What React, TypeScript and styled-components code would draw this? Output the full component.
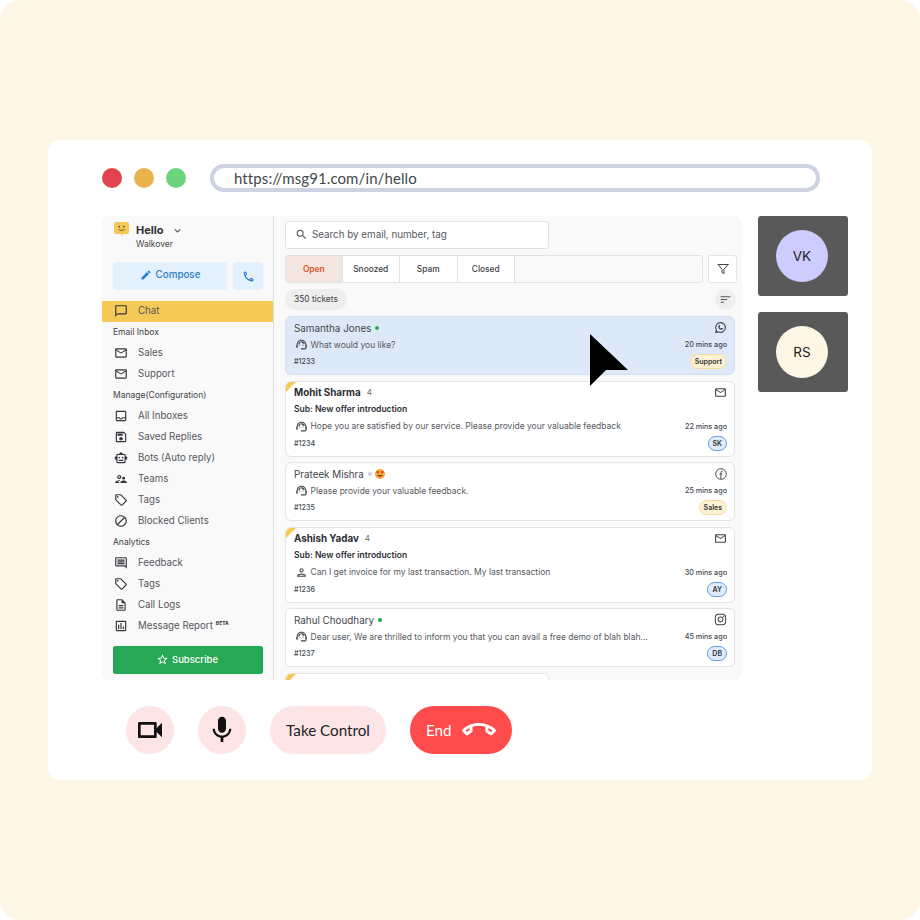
import React from 'react';
import styled, { createGlobalStyle } from 'styled-components';
import {
  MdEdit,
  MdExpandMore,
  MdMic,
  MdOutlineAssessment,
  MdOutlineBlock,
  MdOutlineCall,
  MdOutlineCallEnd,
  MdOutlineChatBubbleOutline,
  MdOutlineDescription,
  MdOutlineEmail,
  MdOutlineInbox,
  MdOutlineInsertComment,
  MdOutlineLocalOffer,
  MdOutlinePerson,
  MdOutlineSave,
  MdOutlineSmartToy,
  MdOutlineStarBorder,
  MdOutlineSupervisorAccount,
  MdOutlineSupportAgent,
  MdOutlineVideocam,
  MdSearch,
  MdSort,
} from 'react-icons/md';
import { FaInstagram } from 'react-icons/fa';
import { TbBrandWhatsapp } from 'react-icons/tb';
import { LuFilter } from 'react-icons/lu';

const GlobalStyle = createGlobalStyle`
  html, body {
    margin: 0;
    background: #fff;
    font-family: Inter, "Liberation Sans", sans-serif;
  }
  * {
    box-sizing: border-box;
  }
`;

const Page = styled.div`
  width: 920px;
  height: 920px;
  padding: 140px 48px;
  background: #fef6e5;
  border-radius: 20px;
`;

const Frame = styled.div`
  height: 640px;
  padding: 24px 24px 26px 54px;
  background: #fff;
  border-radius: 12px;
`;

const TopBar = styled.div`
  display: flex;
  align-items: center;
  height: 28px;
  margin-bottom: 24px;
`;

const Dot = styled.span<{ $color: string }>`
  width: 20px;
  height: 20px;
  margin-right: 12px;
  border-radius: 50%;
  background: ${({ $color }) => $color};
`;

const UrlBar = styled.div`
  display: flex;
  align-items: center;
  width: 610px;
  height: 28px;
  margin-left: 12px;
  padding-left: 20px;
  border: 4px solid #cdd3e2;
  border-radius: 14px;
  color: #44474c;
  font-family: Lato, sans-serif;
  font-size: 15px;
  letter-spacing: 0.1px;
`;

const Workspace = styled.div`
  position: relative;
  display: flex;
  gap: 16px;
  height: 464px;
  margin-bottom: 26px;
`;

const Panel = styled.div`
  display: flex;
  width: 640px;
  height: 464px;
  overflow: hidden;
  background: #f9f9f9;
  border-radius: 8px;
`;

const Sidebar = styled.aside`
  flex: none;
  width: 172px;
  border-right: 1px solid #e0e0e0;
`;

const Brand = styled.div`
  display: grid;
  grid-template-columns: 22px auto 1fr;
  grid-template-rows: 14px 12px;
  row-gap: 1px;
  align-items: center;
  height: 46px;
  padding: 7px 0 0 12px;
  color: #2e3136;
`;

const BrandName = styled.span`
  font-size: 11px;
  font-weight: 700;
`;

const BrandChevron = styled.span`
  display: flex;
  margin-left: 8px;
  color: #555;
`;

const BrandOrg = styled.span`
  grid-column: 2 / 4;
  font-size: 8.5px;
  color: #444;
`;

const Actions = styled.div`
  display: flex;
  gap: 6px;
  height: 28px;
  margin: 0 10px 11px 11px;
`;

const ActionButton = styled.div<{ $wide?: boolean }>`
  display: flex;
  flex: ${({ $wide }) => ($wide ? '1' : 'none')};
  align-items: center;
  justify-content: center;
  gap: 4px;
  width: 30px;
  padding-bottom: ${({ $wide }) => ($wide ? '3px' : '0')};
  background: #e3f0fe;
  border-radius: 3px;
  color: #2b7cc4;
  font-size: 9.8px;
  font-weight: 500;
`;

const NavItem = styled.div<{ $active?: boolean }>`
  display: flex;
  align-items: center;
  height: 21px;
  padding: 0 0 2px 12px;
  background: ${({ $active }) => ($active ? '#f4c955' : 'transparent')};
  color: #55585d;
  font-size: 9.7px;
  svg {
    flex: none;
    width: 14px;
    height: 14px;
    margin-right: 10px;
    color: #34373c;
  }
`;

const NavLabel = styled.div`
  display: flex;
  align-items: center;
  height: 21px;
  padding: 0 0 2px 11px;
  color: #3d4045;
  font-size: 8.5px;
`;

const Beta = styled.span`
  margin: 0 0 6px 3px;
  font-size: 5px;
  font-weight: 700;
  color: #333;
`;

const Subscribe = styled.div`
  display: flex;
  align-items: center;
  justify-content: center;
  gap: 3px;
  height: 28px;
  margin: 9px 10px 0 11px;
  padding: 0 2px 2px 0;
  background: #27a855;
  border-radius: 2px;
  color: #fff;
  font-size: 9.5px;
  font-weight: 500;
`;

const Main = styled.main`
  flex: 1;
  min-width: 0;
  padding: 5px 5px 0 11px;
`;

const SearchBox = styled.div`
  display: flex;
  align-items: center;
  gap: 4px;
  width: 264px;
  height: 28px;
  margin-bottom: 6px;
  padding: 0 0 2px 9px;
  background: #fff;
  border: 1px solid #e2e2e2;
  border-radius: 3px;
  color: #55585d;
  font-size: 9.8px;
`;

const TabRow = styled.div`
  display: flex;
  gap: 5px;
  height: 28px;
  margin-bottom: 6px;
`;

const Tabs = styled.div`
  display: flex;
  flex: 1;
  border: 1px solid #e2e2e2;
  border-radius: 3px;
  overflow: hidden;
`;

const Tab = styled.div<{ $active?: boolean }>`
  display: flex;
  align-items: center;
  justify-content: center;
  width: 57.5px;
  background: ${({ $active }) => ($active ? '#f3e5df' : '#fff')};
  border-right: 1px solid #e2e2e2;
  color: ${({ $active }) => ($active ? '#d9552c' : '#3d4045')};
  font-size: 8.4px;
  font-weight: ${({ $active }) => ($active ? 600 : 500)};
  &:first-child {
    width: 56.5px;
  }
`;

const FilterButton = styled.div`
  display: flex;
  align-items: center;
  justify-content: center;
  width: 29px;
  background: #fff;
  border: 1px solid #e2e2e2;
  border-radius: 3px;
  color: #444;
`;

const CountRow = styled.div`
  display: flex;
  align-items: center;
  justify-content: space-between;
  height: 21px;
  margin: 0 1px 6px 0;
`;

const CountPill = styled.span`
  display: flex;
  align-items: center;
  height: 21px;
  padding: 0 9px 2px;
  background: #eeeeee;
  border-radius: 11px;
  color: #444;
  font-size: 8.4px;
`;

const SortButton = styled.span`
  display: flex;
  align-items: center;
  justify-content: center;
  width: 21px;
  height: 21px;
  background: #eeeeee;
  border-radius: 50%;
  color: #555;
`;

const CardList = styled.div`
  display: flex;
  flex-direction: column;
  gap: 5.5px;
  margin-right: 2px;
`;

const Card = styled.article<{ $selected?: boolean; $unread?: boolean; $short?: boolean }>`
  position: relative;
  flex: none;
  width: ${({ $short }) => ($short ? '264px' : '100%')};
  min-height: ${({ $short }) => ($short ? '30px' : '0')};
  padding: 2px 7px 4px 8px;
  overflow: hidden;
  background: ${({ $selected }) => ($selected ? '#dde9f9' : '#fff')};
  border: 1px solid ${({ $selected }) => ($selected ? '#d3e0f2' : '#e3e3e3')};
  border-radius: 6px;
  &::before {
    content: '';
    display: ${({ $unread }) => ($unread ? 'block' : 'none')};
    position: absolute;
    top: 0;
    left: 0;
    border-top: 10px solid #f4c955;
    border-right: 10px solid transparent;
  }
`;

const CardRow = styled.div`
  display: flex;
  align-items: center;
  justify-content: space-between;
  height: 17px;
`;

const NameGroup = styled.div`
  display: flex;
  align-items: center;
  gap: 3px;
`;

const Name = styled.span<{ $bold?: boolean }>`
  color: ${({ $bold }) => ($bold ? '#2b2e33' : '#43464b')};
  font-size: ${({ $bold }) => ($bold ? '9.8px' : '9.85px')};
  font-weight: ${({ $bold }) => ($bold ? 700 : 400)};
`;

const Count = styled.span`
  margin-left: 3px;
  color: #666;
  font-size: 8px;
`;

const Status = styled.span<{ $color: string }>`
  width: 4px;
  height: 4px;
  margin-left: 1px;
  border-radius: 50%;
  background: ${({ $color }) => $color};
`;

const ChannelIcon = styled.span`
  display: flex;
  color: #3c3f44;
`;

const Subject = styled.div`
  display: flex;
  align-items: center;
  height: 17px;
  color: #2b2e33;
  font-size: 8.5px;
  font-weight: 600;
`;

const Message = styled.div`
  display: flex;
  align-items: center;
  gap: 2.5px;
  color: #55585d;
  font-size: 8.5px;
  svg {
    flex: none;
    margin-left: 1px;
    color: #44474c;
  }
`;

const Time = styled.span`
  color: #44474c;
  font-size: 7.2px;
  font-weight: 500;
`;

const TicketId = styled.span`
  color: #44474c;
  font-size: 7.2px;
  font-weight: 500;
`;

const Tag = styled.span<{ $kind: 'amber' | 'blue' }>`
  display: flex;
  align-items: center;
  height: 15px;
  padding: 0 4px;
  background: ${({ $kind }) => ($kind === 'amber' ? '#fdf1d3' : '#dfecfb')};
  border: 1px solid ${({ $kind }) => ($kind === 'amber' ? '#f6dc98' : '#5b9fe0')};
  border-radius: 8px;
  color: #333;
  font-size: 7px;
  font-weight: 600;
`;

const TileColumn = styled.div`
  display: flex;
  flex-direction: column;
  gap: 16px;
`;

const Tile = styled.div`
  display: flex;
  align-items: center;
  justify-content: center;
  width: 90px;
  height: 80px;
  padding-right: 2px;
  background: #595959;
  border-radius: 3px;
`;

const Avatar = styled.div<{ $color: string }>`
  display: flex;
  align-items: center;
  justify-content: center;
  width: 52px;
  height: 52px;
  background: ${({ $color }) => $color};
  border-radius: 50%;
  color: #222;
  font-size: 13.5px;
`;

const Controls = styled.div`
  display: flex;
  gap: 24px;
  margin-left: 24px;
`;

const RoundButton = styled.div`
  display: flex;
  align-items: center;
  justify-content: center;
  width: 48px;
  height: 48px;
  background: #fde5e6;
  border-radius: 50%;
  color: #111;
`;

const PillButton = styled.div<{ $danger?: boolean }>`
  display: flex;
  align-items: center;
  justify-content: center;
  gap: 10.5px;
  width: ${({ $danger }) => ($danger ? '102px' : '116px')};
  height: 48px;
  background: ${({ $danger }) => ($danger ? '#ff4b4b' : '#fde5e6')};
  border-radius: 24px;
  color: ${({ $danger }) => ($danger ? '#fff' : '#222')};
  font-family: Lato, sans-serif;
  font-size: 15.2px;
`;

const Pointer = styled.svg`
  position: absolute;
  top: 118px;
  left: 488px;
`;

const Logo = () => (
  <svg width="15" height="16" viewBox="0 0 15 16">
    <path d="M2 0h11a2 2 0 0 1 2 2v8a2 2 0 0 1-2 2H9l-1 2-1-2H2a2 2 0 0 1-2-2V2a2 2 0 0 1 2-2z" fill="#f4c955" />
    <circle cx="5.2" cy="4.6" r="0.9" fill="#5b4a1a" />
    <circle cx="9.8" cy="4.6" r="0.9" fill="#5b4a1a" />
    <path d="M4.4 7.2c1.4 1.6 4.8 1.6 6.2 0" fill="none" stroke="#5b4a1a" strokeWidth="0.9" />
  </svg>
);

const HeartEyes = () => (
  <svg width="10" height="10" viewBox="0 0 10 10">
    <circle cx="5" cy="5" r="5" fill="#f7a733" />
    <path d="M2.8 2.4c.5-.7 1.4-.2 1.2.5L3 4.6 1.5 3.5c-.6-.5-.1-1.4.6-1.1zM7.2 2.4c-.5-.7-1.4-.2-1.2.5L7 4.6l1.5-1.1c.6-.5.1-1.4-.6-1.1z" fill="#e2352b" />
    <path d="M2.4 6h5.2c-.3 2.2-4.9 2.2-5.2 0z" fill="#7a3b12" />
  </svg>
);

const FacebookRing = () => (
  <svg width="12" height="12" viewBox="0 0 12 12" fill="none" stroke="currentColor" strokeWidth="0.9">
    <circle cx="6" cy="6" r="5.3" />
    <path d="M7.6 3.2H7c-.7 0-1.1.4-1.1 1.1v6.8M4.4 6h3" />
  </svg>
);

const MailIcon = <MdOutlineEmail size={13} />;
const WhatsappIcon = <TbBrandWhatsapp size={13} />;
const InstagramIcon = <FaInstagram size={13} />;
const AgentIcon = <MdOutlineSupportAgent size={13} />;
const PersonIcon = <MdOutlinePerson size={13} />;

const App: React.FC = () => (
  <>
    <GlobalStyle />
    <Page>
      <Frame>
        <TopBar>
          <Dot $color="#e2434f" />
          <Dot $color="#e9b44c" />
          <Dot $color="#6bd47f" />
          <UrlBar>https://msg91.com/in/hello</UrlBar>
        </TopBar>

        <Workspace>
          <Panel>
            <Sidebar>
              <Brand>
                <Logo />
                <BrandName>Hello</BrandName>
                <BrandChevron>
                  <MdExpandMore size={13} />
                </BrandChevron>
                <span />
                <BrandOrg>Walkover</BrandOrg>
              </Brand>
              <Actions>
                <ActionButton $wide>
                  <MdEdit size={12} />
                  Compose
                </ActionButton>
                <ActionButton>
                  <MdOutlineCall size={13} />
                </ActionButton>
              </Actions>
              <NavItem $active>
                <MdOutlineChatBubbleOutline />
                Chat
              </NavItem>
              <NavLabel>Email Inbox</NavLabel>
              <NavItem><MdOutlineEmail />Sales</NavItem>
              <NavItem><MdOutlineEmail />Support</NavItem>
              <NavLabel>Manage(Configuration)</NavLabel>
              <NavItem><MdOutlineInbox />All Inboxes</NavItem>
              <NavItem><MdOutlineSave />Saved Replies</NavItem>
              <NavItem><MdOutlineSmartToy />Bots (Auto reply)</NavItem>
              <NavItem><MdOutlineSupervisorAccount />Teams</NavItem>
              <NavItem><MdOutlineLocalOffer />Tags</NavItem>
              <NavItem><MdOutlineBlock />Blocked Clients</NavItem>
              <NavLabel>Analytics</NavLabel>
              <NavItem><MdOutlineInsertComment />Feedback</NavItem>
              <NavItem><MdOutlineLocalOffer />Tags</NavItem>
              <NavItem><MdOutlineDescription />Call Logs</NavItem>
              <NavItem>
                <MdOutlineAssessment />
                Message Report
                <Beta>BETA</Beta>
              </NavItem>
              <Subscribe>
                <MdOutlineStarBorder size={13} />
                Subscribe
              </Subscribe>
            </Sidebar>

            <Main>
              <SearchBox>
                <MdSearch size={13} />
                Search by email, number, tag
              </SearchBox>
              <TabRow>
                <Tabs>
                  <Tab $active>Open</Tab>
                  <Tab>Snoozed</Tab>
                  <Tab>Spam</Tab>
                  <Tab>Closed</Tab>
                </Tabs>
                <FilterButton>
                  <LuFilter size={12} />
                </FilterButton>
              </TabRow>
              <CountRow>
                <CountPill>350 tickets</CountPill>
                <SortButton>
                  <MdSort size={13} />
                </SortButton>
              </CountRow>

              <CardList>
                <Card $selected>
                  <CardRow>
                    <NameGroup>
                      <Name>Samantha Jones</Name>
                      <Status $color="#27a855" />
                    </NameGroup>
                    <ChannelIcon>{WhatsappIcon}</ChannelIcon>
                  </CardRow>
                  <CardRow>
                    <Message>{AgentIcon}What would you like?</Message>
                    <Time>20 mins ago</Time>
                  </CardRow>
                  <CardRow>
                    <TicketId>#1233</TicketId>
                    <Tag $kind="amber">Support</Tag>
                  </CardRow>
                </Card>

                <Card $unread>
                  <CardRow>
                    <NameGroup>
                      <Name $bold>Mohit Sharma</Name>
                      <Count>4</Count>
                    </NameGroup>
                    <ChannelIcon>{MailIcon}</ChannelIcon>
                  </CardRow>
                  <Subject>Sub: New offer introduction</Subject>
                  <CardRow>
                    <Message>
                      {AgentIcon}Hope you are satisfied by our service. Please provide your valuable feedback
                    </Message>
                    <Time>22 mins ago</Time>
                  </CardRow>
                  <CardRow>
                    <TicketId>#1234</TicketId>
                    <Tag $kind="blue">SK</Tag>
                  </CardRow>
                </Card>

                <Card>
                  <CardRow>
                    <NameGroup>
                      <Name>Prateek Mishra</Name>
                      <Status $color="#cfcfcf" />
                      <HeartEyes />
                    </NameGroup>
                    <ChannelIcon><FacebookRing /></ChannelIcon>
                  </CardRow>
                  <CardRow>
                    <Message>{AgentIcon}Please provide your valuable feedback.</Message>
                    <Time>25 mins ago</Time>
                  </CardRow>
                  <CardRow>
                    <TicketId>#1235</TicketId>
                    <Tag $kind="amber">Sales</Tag>
                  </CardRow>
                </Card>

                <Card $unread>
                  <CardRow>
                    <NameGroup>
                      <Name $bold>Ashish Yadav</Name>
                      <Count>4</Count>
                    </NameGroup>
                    <ChannelIcon>{MailIcon}</ChannelIcon>
                  </CardRow>
                  <Subject>Sub: New offer introduction</Subject>
                  <CardRow>
                    <Message>{PersonIcon}Can I get invoice for my last transaction. My last transaction</Message>
                    <Time>30 mins ago</Time>
                  </CardRow>
                  <CardRow>
                    <TicketId>#1236</TicketId>
                    <Tag $kind="blue">AY</Tag>
                  </CardRow>
                </Card>

                <Card>
                  <CardRow>
                    <NameGroup>
                      <Name>Rahul Choudhary</Name>
                      <Status $color="#27a855" />
                    </NameGroup>
                    <ChannelIcon>{InstagramIcon}</ChannelIcon>
                  </CardRow>
                  <CardRow>
                    <Message>
                      {AgentIcon}Dear user, We are thrilled to inform you that you can avail a free demo of blah blah...
                    </Message>
                    <Time>45 mins ago</Time>
                  </CardRow>
                  <CardRow>
                    <TicketId>#1237</TicketId>
                    <Tag $kind="blue">DB</Tag>
                  </CardRow>
                </Card>

                <Card $unread $short />
              </CardList>
            </Main>
          </Panel>

          <TileColumn>
            <Tile>
              <Avatar $color="#ccccff">VK</Avatar>
            </Tile>
            <Tile>
              <Avatar $color="#fef6e5">RS</Avatar>
            </Tile>
          </TileColumn>

          <Pointer width="38" height="52" viewBox="0 0 38 52">
            <polygon points="0,0 38,36 16,36 0,52" fill="#000" />
          </Pointer>
        </Workspace>

        <Controls>
          <RoundButton>
            <MdOutlineVideocam size={32} />
          </RoundButton>
          <RoundButton>
            <MdMic size={32} />
          </RoundButton>
          <PillButton>Take Control</PillButton>
          <PillButton $danger>
            End
            <MdOutlineCallEnd size={34} />
          </PillButton>
        </Controls>
      </Frame>
    </Page>
  </>
);

export default App;
